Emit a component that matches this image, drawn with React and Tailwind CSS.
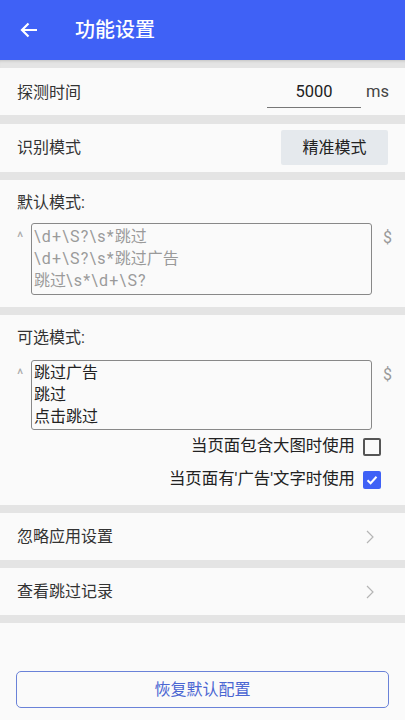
import React from "react";

const font = { fontFamily: 'Roboto, "Noto Sans CJK SC", "Noto Sans", sans-serif' };

function Chevron() {
  return (
    <svg width="10" height="16" viewBox="0 0 10 16" fill="none" stroke="#b5b5b5" strokeWidth="1.2">
      <path d="M2 2 L8 8 L2 14" />
    </svg>
  );
}

function Check({ checked }) {
  if (checked) {
    return (
      <div className="w-[18px] h-[18px] rounded-[2px] bg-[#3f61f6] flex items-center justify-center">
        <svg width="14" height="14" viewBox="0 0 14 14" fill="none" stroke="white" strokeWidth="2">
          <path d="M2.5 7.2 L5.6 10.2 L11.5 3.8" />
        </svg>
      </div>
    );
  }
  return <div className="w-[18px] h-[18px] rounded-[2px] border-2 border-[#555]" />;
}

// latin part of a pattern is set a little wider
function Re({ children }) {
  return <span className="tracking-[1.2px]">{children}</span>;
}

export default function App() {
  return (
    <div className="w-[405px] h-[720px] bg-[#fafafa] flex flex-col text-[#333]" style={font}>
      {/* Header */}
      <div className="h-[60px] bg-[#3f61f6] flex items-center px-[19px] shrink-0">
        <svg width="20" height="20" viewBox="0 0 20 20" fill="none" stroke="white" strokeWidth="2.2">
          <path d="M18 10 H3 M9.5 3.5 L3 10 L9.5 16.5" />
        </svg>
        <span className="ml-[36px] text-white text-[20px] font-medium">功能设置</span>
      </div>
      <div className="h-[8px] bg-[#e4e4e4] shrink-0 shadow-[inset_0_3px_3px_-2px_rgba(0,0,0,0.15)]" />

      {/* 探测时间 */}
      <div className="h-[47px] flex items-center px-[17px] pt-[2px]">
        <span className="text-[16px] flex-1">探测时间</span>
        <div className="w-[94px] h-[30px] border-b border-[#777] flex items-center justify-center text-[16.5px] text-[#222]">
          5000
        </div>
        <span className="ml-[5px] text-[16.5px] text-[#444] w-[22px]">ms</span>
      </div>
      <div className="h-[9px] bg-[#e4e4e4]" />

      {/* 识别模式 */}
      <div className="h-[48px] flex items-center px-[17px] pb-[1px]">
        <span className="text-[16px] flex-1">识别模式</span>
        <div className="w-[107px] h-[35px] bg-[#e5e9ed] rounded-[2px] flex items-center justify-center text-[16px] text-[#222]">
          精准模式
        </div>
      </div>
      <div className="h-[8px] bg-[#e4e4e4]" />

      {/* 默认模式 */}
      <div className="h-[127px] pl-[17px] pr-[13px] pt-[12px]">
        <div className="text-[16px] leading-[22px]">默认模式:</div>
        <div className="flex mt-[9px]">
          <span className="w-[14px] shrink-0 text-[15px] text-[#aaa] leading-[22px] mt-[3px]">^</span>
          <div className="w-[341px] shrink-0 h-[72px] border border-[#888] rounded-[3px] px-[2px] pt-[2px] text-[16px] leading-[22px] text-[#9a9a9a]">
            <div><Re>\d+\S?\s*</Re>跳过</div>
            <div><Re>\d+\S?\s*</Re>跳过广告</div>
            <div>跳过<Re>\s*\d+\S?</Re></div>
          </div>
          <span className="ml-[11px] text-[16px] text-[#999] leading-[22px] mt-[4px]">$</span>
        </div>
      </div>
      <div className="h-[8px] bg-[#e4e4e4]" />

      {/* 可选模式 */}
      <div className="h-[190px] pl-[17px] pr-[13px] pt-[12px]">
        <div className="text-[16px] leading-[22px]">可选模式:</div>
        <div className="flex mt-[11px]">
          <span className="w-[14px] shrink-0 text-[15px] text-[#aaa] leading-[22px] mt-[3px]">^</span>
          <div className="w-[341px] shrink-0 h-[70px] border border-[#888] rounded-[3px] px-[2px] pt-[1px] text-[16px] leading-[22px] text-[#222]">
            <div>跳过广告</div>
            <div>跳过</div>
            <div>点击跳过</div>
          </div>
          <span className="ml-[11px] text-[16px] text-[#999] leading-[22px] mt-[4px]">$</span>
        </div>
        <div className="flex items-center justify-end h-[33px] pr-[11px] gap-[8px]">
          <span className="text-[16.4px] text-[#222]">当页面包含大图时使用</span>
          <Check checked={false} />
        </div>
        <div className="flex items-center justify-end h-[33px] pr-[11px] gap-[8px]">
          <span className="text-[16.4px] text-[#222]">当页面有'广告'文字时使用</span>
          <Check checked />
        </div>
      </div>
      <div className="h-[8px] bg-[#e4e4e4]" />

      <div className="h-[47px] flex items-center px-[17px]">
        <span className="text-[16px] flex-1">忽略应用设置</span>
        <span className="mr-[13px]"><Chevron /></span>
      </div>
      <div className="h-[8px] bg-[#e4e4e4]" />

      <div className="h-[47px] flex items-center px-[17px]">
        <span className="text-[16px] flex-1">查看跳过记录</span>
        <span className="mr-[13px]"><Chevron /></span>
      </div>
      <div className="h-[8px] bg-[#e4e4e4]" />

      <div className="flex-1 flex flex-col justify-end px-[16px] pb-[12px]">
        <div className="h-[37px] border-[1.5px] border-[#6a82d8] rounded-[5px] flex items-center justify-center text-[16px] text-[#4a66d2]">
          恢复默认配置
        </div>
      </div>
    </div>
  );
}
